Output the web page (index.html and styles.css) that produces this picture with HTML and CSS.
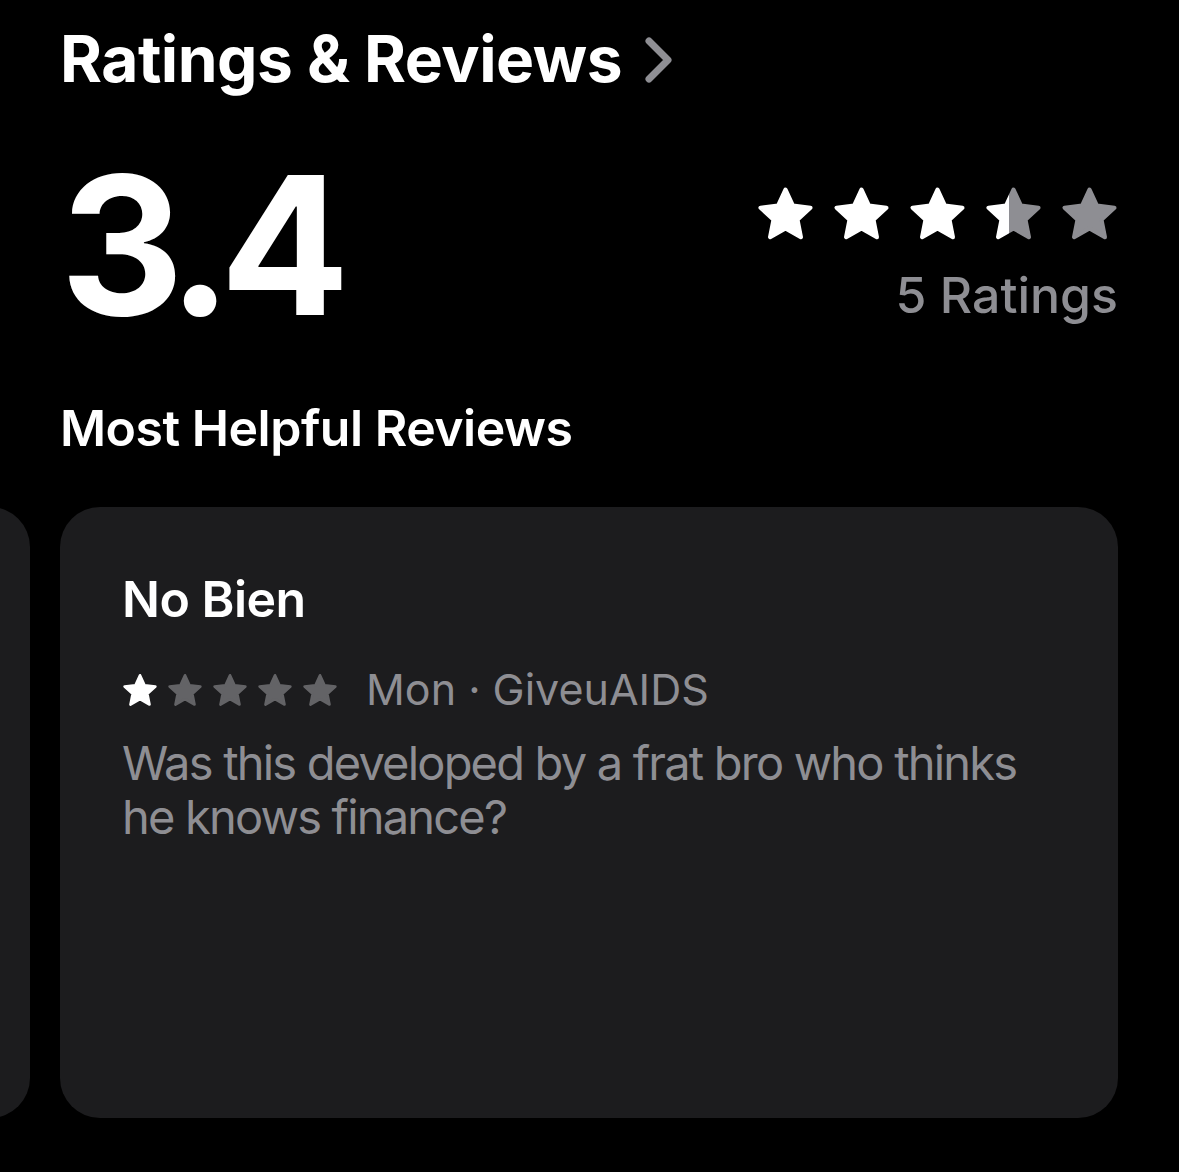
FILE: index.html
```html
<!DOCTYPE html>
<html lang="en">
<head>
    <meta charset="UTF-8">
    <meta name="viewport" content="width=device-width, initial-scale=1.0">
    <title>Ratings &amp; Reviews</title>
    <link rel="stylesheet" href="styles.css">
</head>
<body>

<svg class="defs" width="0" height="0">
    <defs>
        <linearGradient id="partFill" x1="0" x2="1" y1="0" y2="0">
            <stop offset="0.4" stop-color="#ffffff"/>
            <stop offset="0.4" stop-color="#8e8e93"/>
        </linearGradient>
        <path id="star" d="M50 3 L64.1 33.6 L97.6 37.6 L72.8 60.4 L79.4 93.5 L50 77 L20.6 93.5 L27.2 60.4 L2.4 37.6 L35.9 33.6 Z"/>
    </defs>
</svg>

<div class="page">
    <div class="section-head">
        <h1>Ratings &amp; Reviews</h1>
        <svg class="chevron" viewBox="0 0 30 48" width="30" height="48">
            <path d="M5 5 L24 24 L5 43" fill="none" stroke="#8e8e93" stroke-width="7" stroke-linecap="round" stroke-linejoin="round"/>
        </svg>
    </div>

    <div class="summary">
        <div class="score">3.4</div>
        <div class="summary-right">
            <div class="stars-lg">
                <svg viewBox="-4 -4 108 105"><use href="#star" class="full"/></svg>
                <svg viewBox="-4 -4 108 105"><use href="#star" class="full"/></svg>
                <svg viewBox="-4 -4 108 105"><use href="#star" class="full"/></svg>
                <svg viewBox="-4 -4 108 105"><use href="#star" class="part"/></svg>
                <svg viewBox="-4 -4 108 105"><use href="#star" class="empty"/></svg>
            </div>
            <div class="count">5 Ratings</div>
        </div>
    </div>

    <h2>Most Helpful Reviews</h2>

    <div class="carousel">
        <div class="card card-prev"></div>
        <div class="card">
            <h3>No Bien</h3>
            <div class="meta">
                <div class="stars-sm">
                    <svg viewBox="-4 -4 108 105"><use href="#star" class="full"/></svg>
                    <svg viewBox="-4 -4 108 105"><use href="#star" class="dim"/></svg>
                    <svg viewBox="-4 -4 108 105"><use href="#star" class="dim"/></svg>
                    <svg viewBox="-4 -4 108 105"><use href="#star" class="dim"/></svg>
                    <svg viewBox="-4 -4 108 105"><use href="#star" class="dim"/></svg>
                </div>
                <span>Mon · GiveuAIDS</span>
            </div>
            <p class="review-text">Was this developed by a frat bro who thinks<br>he knows finance?</p>
        </div>
    </div>
</div>

</body>
</html>
```

FILE: styles.css
```css
body {
    margin: 0;
    background-color: #000;
    color: #fff;
    font-family: Inter, "Noto Sans", sans-serif;
    overflow: hidden;
}

.defs {
    position: absolute;
}

.page {
    padding: 27px 61px 0 60px;
}

.section-head {
    display: flex;
    align-items: center;
    gap: 22px;
}

h1 {
    margin: 0;
    font-size: 64px;
    line-height: 64px;
    font-weight: 700;
    letter-spacing: -0.5px;
}

.chevron {
    margin-top: 2px;
}

.summary {
    display: flex;
    justify-content: space-between;
    margin-top: 58px;
}

.score {
    font-size: 192px;
    line-height: 192px;
    font-weight: 700;
    letter-spacing: -12px;
}

.summary-right {
    display: flex;
    flex-direction: column;
    align-items: flex-end;
    margin-top: 37px;
}

.stars-lg {
    display: flex;
    gap: 19px;
}

.stars-lg svg {
    width: 57px;
    height: 55px;
}

use {
    stroke-width: 8;
    stroke-linejoin: round;
}

.full {
    fill: #fff;
    stroke: #fff;
}

.part {
    fill: url(#partFill);
    stroke: url(#partFill);
}

.empty {
    fill: #8e8e93;
    stroke: #8e8e93;
}

.dim {
    fill: #636366;
    stroke: #636366;
}

.count {
    margin-top: 29px;
    font-size: 50px;
    line-height: 50px;
    font-weight: 500;
    color: #8e8e93;
}

h2 {
    margin: 62px 0 0;
    font-size: 50px;
    line-height: 50px;
    font-weight: 600;
    letter-spacing: -0.5px;
}

.carousel {
    display: flex;
    gap: 30px;
    margin-top: 54px;
}

.card {
    flex: none;
    box-sizing: border-box;
    width: 1058px;
    height: 611px;
    padding: 67px 30px 0 62px;
    background-color: #1c1c1e;
    border-radius: 40px;
}

.card-prev {
    margin-left: -1088px;
}

h3 {
    margin: 0;
    font-size: 50px;
    line-height: 50px;
    font-weight: 600;
    letter-spacing: -0.5px;
}

.meta {
    display: flex;
    align-items: center;
    gap: 28px;
    margin-top: 44px;
    font-size: 43px;
    line-height: 43px;
    color: #8e8e93;
}

.stars-sm {
    display: flex;
    gap: 9px;
}

.stars-sm svg {
    width: 36px;
    height: 34px;
}

.review-text {
    margin: 25px 0 0;
    font-size: 47px;
    line-height: 54px;
    letter-spacing: -1.8px;
    color: #8e8e93;
    white-space: nowrap;
}
```
